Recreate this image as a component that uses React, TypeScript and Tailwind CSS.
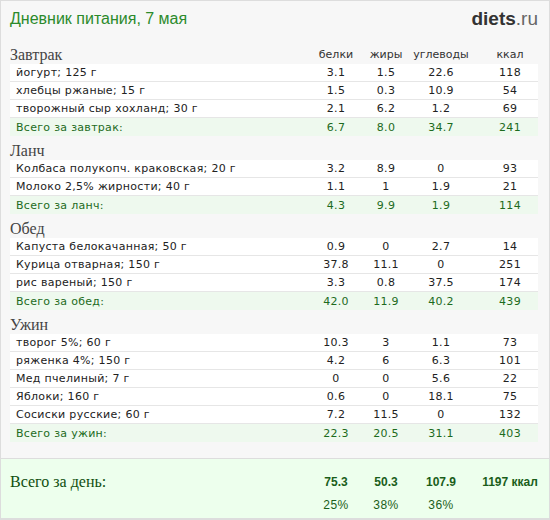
import React from "react";

type Item = [string, string, string, string, string];

const meals: { title: string; items: Item[]; total: Item }[] = [
  {
    title: "Завтрак",
    items: [
      ["йогурт; 125 г", "3.1", "1.5", "22.6", "118"],
      ["хлебцы ржаные; 15 г", "1.5", "0.3", "10.9", "54"],
      ["творожный сыр хохланд; 30 г", "2.1", "6.2", "1.2", "69"],
    ],
    total: ["Всего за завтрак:", "6.7", "8.0", "34.7", "241"],
  },
  {
    title: "Ланч",
    items: [
      ["Колбаса полукопч. краковская; 20 г", "3.2", "8.9", "0", "93"],
      ["Молоко 2,5% жирности; 40 г", "1.1", "1", "1.9", "21"],
    ],
    total: ["Всего за ланч:", "4.3", "9.9", "1.9", "114"],
  },
  {
    title: "Обед",
    items: [
      ["Капуста белокачанная; 50 г", "0.9", "0", "2.7", "14"],
      ["Курица отварная; 150 г", "37.8", "11.1", "0", "251"],
      ["рис вареный; 150 г", "3.3", "0.8", "37.5", "174"],
    ],
    total: ["Всего за обед:", "42.0", "11.9", "40.2", "439"],
  },
  {
    title: "Ужин",
    items: [
      ["творог 5%; 60 г", "10.3", "3", "1.1", "73"],
      ["ряженка 4%; 150 г", "4.2", "6", "6.3", "101"],
      ["Мед пчелиный; 7 г", "0", "0", "5.6", "22"],
      ["Яблоки; 160 г", "0.6", "0", "18.1", "75"],
      ["Сосиски русские; 60 г", "7.2", "11.5", "0", "132"],
    ],
    total: ["Всего за ужин:", "22.3", "20.5", "31.1", "403"],
  },
];

const serif = "font-['Liberation_Serif',serif]";
const verdana = "font-['DejaVu_Sans',sans-serif]";

function Cols({ v, className = "" }: { v: string[]; className?: string }) {
  return (
    <>
      <div className={`w-[50px] text-center ${className}`}>{v[0]}</div>
      <div className={`w-[50px] text-center ${className}`}>{v[1]}</div>
      <div className={`w-[60px] text-center ${className}`}>{v[2]}</div>
      <div className={`ml-[11px] w-[56px] text-center ${className}`}>{v[3]}</div>
    </>
  );
}

function Row({ item, total }: { item: Item; total?: boolean }) {
  return (
    <div
      className={`flex h-[18px] items-center text-[11px] leading-none ${verdana} ${
        total ? "bg-[#eef9ee] text-[#1d6b1d]" : "border-b border-[#e6e6e6] bg-white text-[#222]"
      }`}
    >
      <div className="flex-1 pl-[6px] tracking-[0.3px]">{item[0]}</div>
      <Cols v={item.slice(1)} className="tracking-[0.3px]" />
    </div>
  );
}

export default function App() {
  return (
    <div className="box-border h-[520px] w-[550px] overflow-hidden border border-[#dddddd] bg-[#f7f7f7]">
      <div className="pl-[9px] pr-[11px]">
        <div className="flex h-[39px] items-center justify-between pb-[4px]">
          <div className="font-['Liberation_Sans',sans-serif] text-[16px] text-[#2b8a2b]">
            Дневник питания, 7 мая
          </div>
          <div className="font-['Liberation_Sans',sans-serif] text-[19px] leading-none text-[#333]">
            <span className="font-bold">diets</span>
            <span className="text-[#666]">.ru</span>
          </div>
        </div>

        {meals.map((m, i) => (
          <div key={m.title}>
            <div className="flex h-[24px] items-end pb-[1px]">
              <div className={`flex-1 text-[16px] leading-[17px] text-[#444] ${serif}`}>{m.title}</div>
              {i === 0 && (
                <div className={`flex self-center pt-[8px] text-[11px] text-[#333] ${verdana}`}>
                  <Cols v={["белки", "жиры", "углеводы", "ккал"]} />
                </div>
              )}
            </div>
            {m.items.map((it) => (
              <Row key={it[0]} item={it} />
            ))}
            <Row item={m.total} total />
          </div>
        ))}
      </div>

      <div className="mt-[16px] h-[61px] border-y border-[#dddddd] bg-[#edffed] pl-[9px] pr-[11px]">
        <div className="flex pt-[11px]">
          <div className={`flex-1 text-[16px] text-[#0f4f0f] ${serif}`}>Всего за день:</div>
          <div className="flex pt-[3px] font-['Liberation_Sans',sans-serif] text-[12px] font-bold text-[#1a5e1a]">
            <Cols v={["75.3", "50.3", "107.9", "1197 ккал"]} />
          </div>
        </div>
        <div className="flex pt-[2px] font-['Liberation_Sans',sans-serif] text-[12px] tracking-[0.5px] text-[#1a5e1a]">
          <div className="flex-1" />
          <Cols v={["25%", "38%", "36%", ""]} />
        </div>
      </div>
    </div>
  );
}
